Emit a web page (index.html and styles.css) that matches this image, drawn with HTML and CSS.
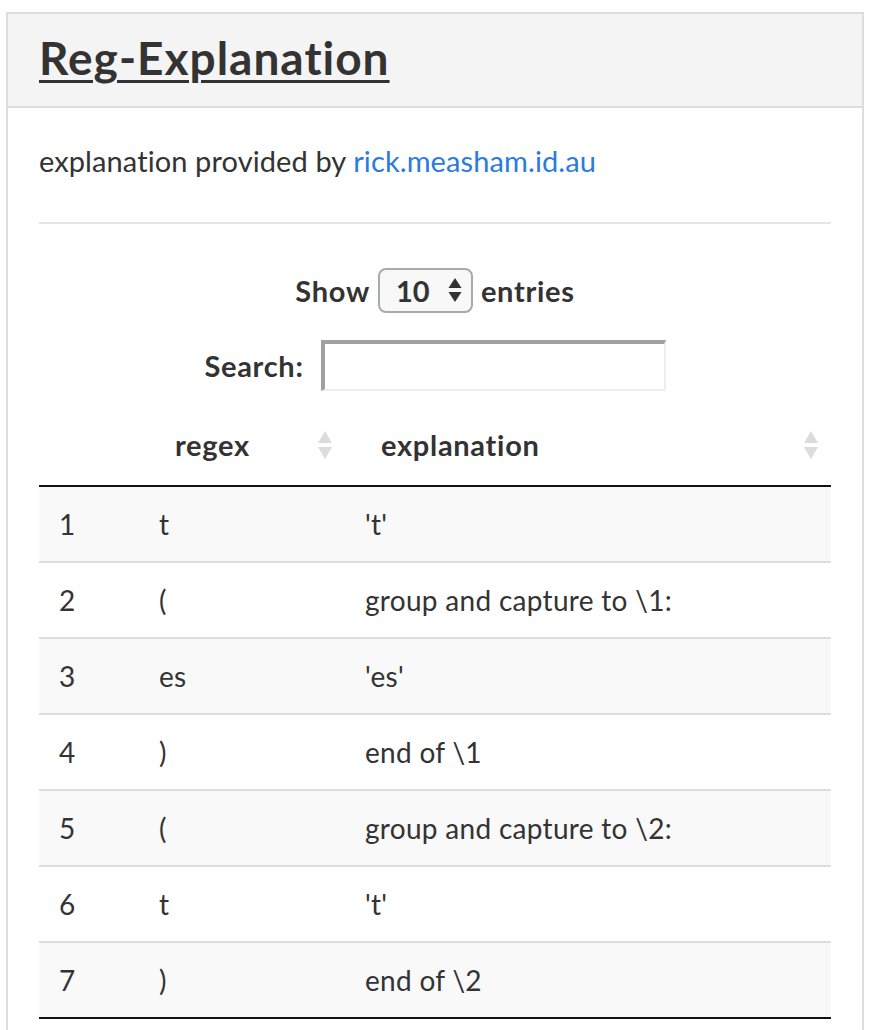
FILE: index.html
```
<!DOCTYPE html>
<html>
<head>
<meta charset="utf-8">
<link rel="stylesheet" href="styles.css">
</head>
<body>
<div class="panel">
  <div class="panel-head">
    <h2 class="title">Reg-Explanation</h2>
  </div>
  <div class="panel-body">
    <p class="credit">explanation provided by <a class="link" href="#">rick.measham.id.au</a></p>
    <hr class="rule">
    <div class="controls">
      <div class="length">
        <span>Show</span>
        <div class="select">
          <span class="select-val">10</span>
          <svg class="select-arrows" width="14" height="26" viewBox="0 0 14 26"><path d="M7 1 L13.5 11 H0.5 Z" fill="#333"/><path d="M7 25 L13.5 15 H0.5 Z" fill="#333"/></svg>
        </div>
        <span>entries</span>
      </div>
      <div class="search">
        <span>Search:</span>
        <div class="search-input"></div>
      </div>
    </div>
    <table class="dt">
      <colgroup><col class="c1"><col class="c2"><col class="c3"></colgroup>
      <thead>
        <tr>
          <th class="th-blank"></th>
          <th><div class="th-in"><span>regex</span><svg class="sort" width="16" height="30" viewBox="0 0 16 30"><path d="M8 1 L15 13 H1 Z" fill="#dcdcdc"/><path d="M8 29 L15 17 H1 Z" fill="#dcdcdc"/></svg></div></th>
          <th><div class="th-in"><span>explanation</span><svg class="sort" width="16" height="30" viewBox="0 0 16 30"><path d="M8 1 L15 13 H1 Z" fill="#dcdcdc"/><path d="M8 29 L15 17 H1 Z" fill="#dcdcdc"/></svg></div></th>
        </tr>
      </thead>
      <tbody>
        <tr class="odd"><td>1</td><td>t</td><td>'t'</td></tr>
        <tr><td>2</td><td>(</td><td>group and capture to \1:</td></tr>
        <tr class="odd"><td>3</td><td>es</td><td>'es'</td></tr>
        <tr><td>4</td><td>)</td><td>end of \1</td></tr>
        <tr class="odd"><td>5</td><td>(</td><td>group and capture to \2:</td></tr>
        <tr><td>6</td><td>t</td><td>'t'</td></tr>
        <tr class="odd"><td>7</td><td>)</td><td>end of \2</td></tr>
      </tbody>
    </table>
  </div>
</div>
</body>
</html>
```
FILE: styles.css
```
html, body {
  margin: 0;
  padding: 0;
  background: #fff;
}
body {
  font-family: Lato, "Open Sans", sans-serif;
  color: #333;
  font-size: 28px;
  padding: 12px 6px 0 6px;
  overflow: hidden;
}
.panel {
  border: 2px solid #dddddd;
  border-bottom: none;
  height: 1018px;
  box-sizing: border-box;
  overflow: hidden;
}
.panel-head {
  background: #f4f4f4;
  border-bottom: 2px solid #dddddd;
  height: 92px;
  padding: 0 31px;
  display: flex;
  align-items: center;
}
.title {
  margin: 0;
  font-size: 46px;
  font-weight: 700;
  text-decoration: underline;
  text-decoration-thickness: 3px;
  text-underline-offset: 5px;
  line-height: 1;
  letter-spacing: 1px;
  position: relative;
  top: -2px;
}
.panel-body {
  padding: 0 31px;
}
.credit {
  margin: 0;
  padding-top: 32px;
  line-height: 42px;
  height: 42px;
  font-size: 29px;
  letter-spacing: 0.1px;
}
.link {
  color: #2a7ae2;
  text-decoration: none;
}
.rule {
  margin: 40px 0 0 0;
  border: none;
  border-top: 2px solid #e6e6e6;
  height: 0;
}
.controls {
  display: flex;
  flex-direction: column;
  align-items: center;
  font-weight: 700;
  font-size: 29px;
  letter-spacing: 0.7px;
}
.length {
  margin-top: 43px;
  display: flex;
  align-items: center;
  gap: 8px;
  height: 46px;
}
.select {
  width: 95px;
  height: 45px;
  box-sizing: border-box;
  border: 2px solid #aaaaaa;
  border-radius: 8px;
  background: #f8f8f8;
  display: flex;
  align-items: center;
  justify-content: space-between;
  padding: 0 9px 0 16px;
  letter-spacing: 0;
}
.select-arrows {
  display: block;
}
.search {
  margin-top: 27px;
  display: flex;
  align-items: center;
  gap: 17px;
  height: 51px;
}
.search-input {
  width: 345px;
  height: 51px;
  box-sizing: border-box;
  border-style: solid;
  border-width: 4px 2px 2px 4px;
  border-color: #a0a0a0 #eeeeee #eeeeee #a0a0a0;
  background: #fff;
}
.dt {
  width: 100%;
  margin-top: 13px;
  border-collapse: collapse;
  table-layout: fixed;
  border-bottom: 2px solid #111;
}
.c1 { width: 100px; }
.c2 { width: 206px; }
.dt th {
  font-weight: 700;
  font-size: 29px;
  letter-spacing: 0.7px;
  text-align: left;
  padding: 20px 12px 19px 36px;
  line-height: 42px;
  border-bottom: 2px solid #111;
}
.th-in {
  display: flex;
  align-items: center;
  justify-content: space-between;
}
.sort {
  display: block;
}
.dt td {
  padding: 16px 20px;
  line-height: 42px;
  border-top: 2px solid #dddddd;
  font-weight: 400;
  letter-spacing: 0.3px;
}
.dt tbody tr:first-child td {
  border-top: none;
}
.dt tr.odd td {
  background: #f9f9f9;
}
```
